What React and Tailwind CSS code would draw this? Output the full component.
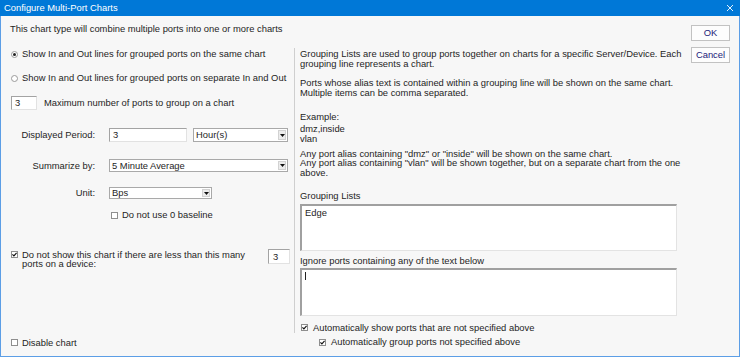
import React from 'react'

function Radio({ checked }) {
  return (
    <span className="w-[7px] h-[7px] rounded-full border border-[#9a9a9a] bg-white flex items-center justify-center shrink-0">
      {checked && <span className="w-[3px] h-[3px] rounded-full bg-[#222]" />}
    </span>
  )
}

function Check({ checked }) {
  return (
    <span className="w-[7px] h-[7px] border border-[#8e8e8e] bg-white flex items-center justify-center shrink-0">
      {checked && (
        <svg width="5" height="5" viewBox="0 0 5 5">
          <path d="M0.4 2.4 L1.9 3.9 L4.6 0.9" stroke="#111" strokeWidth="1.2" fill="none" />
        </svg>
      )}
    </span>
  )
}

function Select({ value, className }) {
  return (
    <div className={`flex items-stretch bg-white border border-[#a9a9a9] ${className}`}>
      <span className="flex-1 pl-[2px] flex items-center">{value}</span>
      <span className="w-[8px] m-[1px] bg-[#ececec] border border-[#d2d2d2] flex items-center justify-center">
        <svg width="5" height="3" viewBox="0 0 5 3">
          <path d="M0 0h5L2.5 3z" fill="#111" />
        </svg>
      </span>
    </div>
  )
}

export default function App() {
  return (
    <div className="w-[740px] h-[357px] flex flex-col font-['Liberation_Sans',Arial,sans-serif] text-[9.4px] leading-[9.5px] text-[#1e1e1e]">
      {/* title bar */}
      <div className="h-[16px] bg-[#0078d7] flex items-center justify-between pl-[4px] pr-[7px] text-white">
        <span>Configure Multi-Port Charts</span>
        <svg width="6" height="6" viewBox="0 0 6 6">
          <path d="M0 0L6 6M6 0L0 6" stroke="#fff" strokeWidth="0.9" />
        </svg>
      </div>

      <div className="flex-1 flex bg-[#f7f7f7] border-x border-b border-[#5c9ee6]">
        {/* left column */}
        <div className="w-[293px] flex flex-col pl-[9px]">
          <div className="mt-[8px] leading-[10px]">This chart type will combine multiple ports into one or more charts</div>

          <div className="mt-[15px] h-[10px] flex items-center gap-[4px] pl-[1px]">
            <Radio checked />
            <span>Show In and Out lines for grouped ports on the same chart</span>
          </div>
          <div className="mt-[14px] h-[10px] flex items-center gap-[4px] pl-[1px]">
            <Radio />
            <span>Show In and Out lines for grouped ports on separate In and Out</span>
          </div>

          <div className="mt-[13px] flex items-center gap-[7px] pl-[1px]">
            <div className="w-[26px] h-[14px] bg-white border border-[#a3a3a3] border-b-[#e2e2e2] border-r-[#e2e2e2] pl-[3px] flex items-center">3</div>
            <span>Maximum number of ports to group on a chart</span>
          </div>

          <div className="mt-[18px] flex items-center">
            <span className="w-[85px] text-right">Displayed Period:</span>
            <div className="ml-[14px] w-[78px] h-[14px] bg-white border border-[#a3a3a3] border-b-[#e2e2e2] border-r-[#e2e2e2] pl-[3px] flex items-center">3</div>
            <Select value="Hour(s)" className="ml-[6px] w-[95px] h-[14px]" />
          </div>

          <div className="mt-[17px] flex items-center">
            <span className="w-[85px] text-right">Summarize by:</span>
            <Select value="5 Minute Average" className="ml-[14px] w-[179px] h-[13px]" />
          </div>

          <div className="mt-[15px] flex items-center">
            <span className="w-[85px] text-right">Unit:</span>
            <Select value="Bps" className="ml-[14px] w-[103px] h-[12px]" />
          </div>

          <div className="mt-[11px] h-[10px] flex items-center gap-[4px] pl-[101px]">
            <Check />
            <span>Do not use 0 baseline</span>
          </div>

          <div className="mt-[29px] flex items-start pl-[1px]">
            <div className="mt-[1.5px]">
              <Check checked />
            </div>
            <div className="ml-[4px] w-[246px] pt-[0.5px]">
              Do not show this chart if there are less than this many
              <br />
              ports on a device:
            </div>
            <div className="w-[22px] h-[15px] bg-white border border-[#a3a3a3] border-b-[#e2e2e2] border-r-[#e2e2e2] pl-[4px] flex items-center">3</div>
          </div>

          <div className="mt-[69px] h-[10px] flex items-center gap-[4px] pl-[1px]">
            <Check />
            <span>Disable chart</span>
          </div>
        </div>

        {/* middle column */}
        <div className="w-[391px] flex flex-col">
          <div className="mt-[32px] h-[285px] border-l border-[#cfcfcf] pl-[5px] flex flex-col">
            <div className="mt-[1px] whitespace-nowrap">
              Grouping Lists are used to group ports together on charts for a specific Server/Device. Each
              <br />
              grouping line represents a chart.
            </div>
            <div className="mt-[10px] whitespace-nowrap">
              Ports whose alias text is contained within a grouping line will be shown on the same chart.
              <br />
              Multiple items can be comma separated.
            </div>
            <div className="mt-[15px]">Example:</div>
            <div className="mt-[2.5px]">
              dmz,inside
              <br />
              vlan
            </div>
            <div className="mt-[5.5px] whitespace-nowrap">
              Any port alias containing "dmz" or "inside" will be shown on the same chart.
              <br />
              Any port alias containing "vlan" will be shown together, but on a separate chart from the one
              <br />
              above.
            </div>
            <div className="mt-[13.5px]">Grouping Lists</div>
            <div className="mt-[3.5px] w-[377px] h-[47px] bg-white border-t-2 border-l-2 border-t-[#a0a0a0] border-l-[#a0a0a0] border-r border-b border-r-[#e3e3e3] border-b-[#e3e3e3] pl-[3px] pt-[2px]">
              Edge
            </div>
            <div className="mt-[5px]">Ignore ports containing any of the text below</div>
            <div className="mt-[2.5px] w-[377px] h-[48px] bg-white border-t-2 border-l-2 border-t-[#a0a0a0] border-l-[#a0a0a0] border-r border-b border-r-[#e3e3e3] border-b-[#e3e3e3] pl-[3px] pt-[2px]">
              <div className="w-px h-[8px] bg-[#222]" />
            </div>
            <div className="mt-[7px] h-[10px] flex items-center gap-[5px] pl-[1px]">
              <Check checked />
              <span>Automatically show ports that are not specified above</span>
            </div>
          </div>
          <div className="mt-[4px] h-[10px] flex items-center gap-[5px] pl-[25px]">
            <Check checked />
            <span>Automatically group ports not specified above</span>
          </div>
        </div>

        {/* buttons */}
        <div className="ml-[6px] flex flex-col">
          <button className="mt-[9px] w-[39px] h-[16px] bg-[#fdfdfd] border border-[#c2c2c2] text-[#22227a]">OK</button>
          <button className="mt-[5.5px] w-[39px] h-[16px] bg-[#fdfdfd] border border-[#c2c2c2] text-[#22227a]">Cancel</button>
        </div>
      </div>
    </div>
  )
}
